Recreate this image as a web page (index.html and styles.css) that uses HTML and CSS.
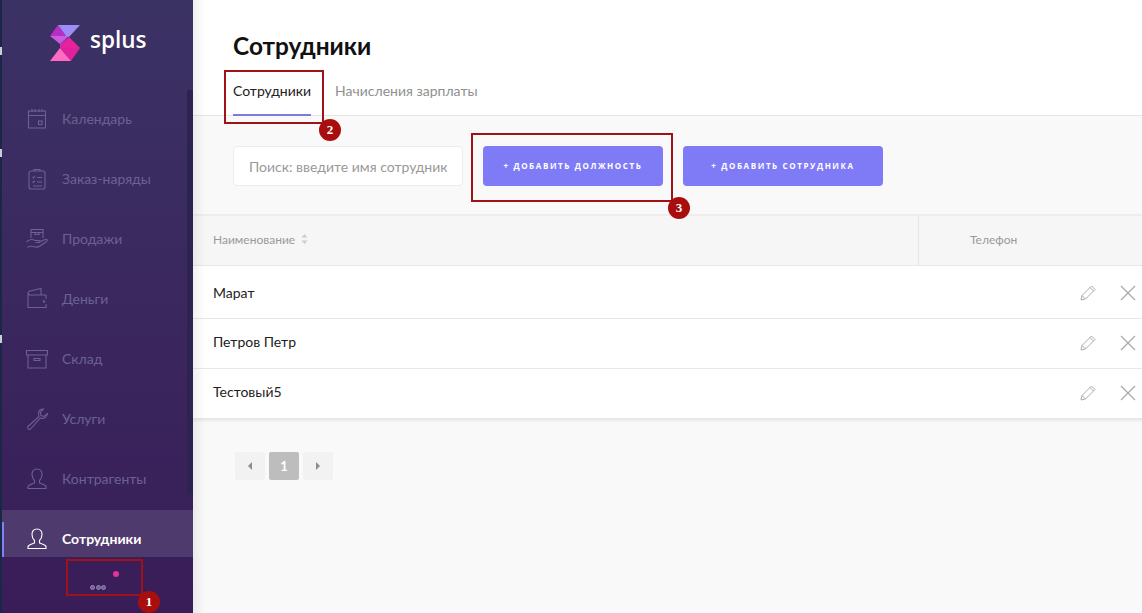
FILE: index.html
```html
<!DOCTYPE html>
<html lang="ru">
<head>
    <meta charset="UTF-8">
    <meta name="viewport" content="width=device-width, initial-scale=1.0">
    <title>Сотрудники</title>
    <link rel="stylesheet" href="styles.css">
</head>
<body>

    <div class="sidebar">
        <!-- Край соседнего окна слева -->
        <span class="edge-bit bit-1"></span>
        <span class="edge-bit bit-2"></span>
        <span class="edge-bit bit-3"></span>

        <div class="logo">
            <svg class="logo-mark" width="32" height="38" viewBox="0 0 32 38">
                <polygon points="0,11 8,0 16,11" fill="#b52fc4"/>
                <polygon points="8,0 30,0 19,12 16,11" fill="#9d8cf5"/>
                <polygon points="0,11 19,11 10,19" fill="#c95be0"/>
                <polygon points="19,12 30,23 10,23" fill="#e8229f"/>
                <polygon points="10,19 19,12 10,23" fill="#d92ab5"/>
                <polygon points="10,23 30,23 21,36" fill="#e0209c"/>
                <polygon points="10,23 21,36 0,36" fill="#ff6bc1"/>
            </svg>
            <span class="logo-text">splus</span>
        </div>

        <div class="nav">
            <a class="nav-item">
                <svg class="nav-icon" viewBox="0 0 24 24"><rect x="3.5" y="4" width="17" height="17"/><path d="M3.5 8.5h17M7 2v3M10 2v3M14 2v3M17 2v3"/><rect x="13.5" y="14" width="3.5" height="3.5"/></svg>
                Календарь
            </a>
            <a class="nav-item">
                <svg class="nav-icon" viewBox="0 0 24 24"><rect x="4" y="4" width="16" height="18" rx="2"/><path d="M9 4V2.5h6V4M7.5 10l1 1 1.5-2M12 10.5h5M7.5 14.5l1 1 1.5-2M12 15h5M8 19h9"/></svg>
                Заказ-наряды
            </a>
            <a class="nav-item">
                <svg class="nav-icon" viewBox="0 0 24 24"><path d="M6 11V2.5h12V11M6 5.5h12M10 5.5v2h4v-2"/><path d="M1.5 15c3-3 6-3 8.5-1.5h4c1.5 0 1.5 2 0 2h-3.5M14 15l6-2.5c2-.7 3 1 1.5 2L15 19c-3 2-5 1-7 .5-2-.5-4 0-5.5 1"/></svg>
                Продажи
            </a>
            <a class="nav-item">
                <svg class="nav-icon" viewBox="0 0 24 24"><path d="M21 8H5.5C4 8 3 7 3 6v14.5h18V17M21 12V8"/><path d="M3 6c0-1 1-1.5 2-2l11-2.500V8"/><circle cx="19" cy="14.5" r=".7"/></svg>
                Деньги
            </a>
            <a class="nav-item">
                <svg class="nav-icon" viewBox="0 0 24 24"><path d="M1.5 3.5h21V8h-21zM3 8v13h18V8M9 11.5h6v2H9z"/></svg>
                Склад
            </a>
            <a class="nav-item">
                <svg class="nav-icon" viewBox="0 0 24 24"><path d="M14 9.5 3 19.5c-1 1 0 2.5.8 2.8.8.3 1.7 0 2.2-.8l9.5-10.500c3 1.200 6.500-.5 7-4.500L19 9.5l-3-1-.8-3L18.500 2c-4-.5-6 3-4.500 7.500z"/></svg>
                Услуги
            </a>
            <a class="nav-item">
                <svg class="nav-icon" viewBox="0 0 24 24"><path d="M12 2c-3.500 0-5 2.500-5 5.500 0 2.500 1 4.500 2.500 6V16c-2.500 1-6 1.500-6.500 3.500v2h18v-2c-.5-2-4-2.500-6.500-3.500v-2.500c1.500-1.500 2.500-3.500 2.500-6C17 4.500 15.500 2 12 2z"/></svg>
                Контрагенты
            </a>
            <a class="nav-item active">
                <svg class="nav-icon" viewBox="0 0 24 24"><path d="M12 2c-3.500 0-5 2.500-5 5.500 0 2.500 1 4.500 2.500 6V16c-2.500 1-6 1.500-6.500 3.500v2h18v-2c-.5-2-4-2.500-6.500-3.500v-2.500c1.500-1.500 2.500-3.500 2.500-6C17 4.500 15.500 2 12 2z"/></svg>
                Сотрудники
            </a>
        </div>

        <div class="scrollbar"></div>

        <div class="more">
            <span class="more-dot"></span>
            <span class="more-ring"></span>
            <span class="more-ring"></span>
            <span class="more-ring"></span>
        </div>
    </div>

    <div class="main">
        <div class="header">
            <h1>Сотрудники</h1>
            <div class="tabs">
                <a class="tab active">Сотрудники</a>
                <a class="tab">Начисления зарплаты</a>
            </div>
        </div>

        <div class="toolbar">
            <input class="search" type="text" placeholder="Поиск: введите имя сотрудника">
            <button class="add-button wide">+ Добавить должность</button>
            <button class="add-button wider">+ Добавить сотрудника</button>
        </div>

        <div class="table">
            <div class="table-head">
                <div class="col-name">
                    Наименование
                    <svg class="sort-icon" width="7" height="10" viewBox="0 0 7 10"><path d="M3.5 0 6.5 3.5H.5zM3.5 10 .5 6.5h6z"/></svg>
                </div>
                <div class="col-phone">Телефон</div>
            </div>

            <div class="table-row first">
                <span>Марат</span>
                <div class="row-actions">
                    <svg class="edit-icon" viewBox="0 0 16 16"><path d="M1 15l1-4.500L11.500 1 15 4.500 5.500 14zM2 10.500 5.500 14M10 2.500 13.500 6"/></svg>
                    <svg class="del-icon" viewBox="0 0 16 16"><path d="M1 1l14 14M15 1 1 15"/></svg>
                </div>
            </div>
            <div class="table-row">
                <span>Петров Петр</span>
                <div class="row-actions">
                    <svg class="edit-icon" viewBox="0 0 16 16"><path d="M1 15l1-4.500L11.500 1 15 4.500 5.500 14zM2 10.500 5.500 14M10 2.500 13.500 6"/></svg>
                    <svg class="del-icon" viewBox="0 0 16 16"><path d="M1 1l14 14M15 1 1 15"/></svg>
                </div>
            </div>
            <div class="table-row">
                <span>Тестовый5</span>
                <div class="row-actions">
                    <svg class="edit-icon" viewBox="0 0 16 16"><path d="M1 15l1-4.500L11.500 1 15 4.500 5.500 14zM2 10.500 5.500 14M10 2.500 13.500 6"/></svg>
                    <svg class="del-icon" viewBox="0 0 16 16"><path d="M1 1l14 14M15 1 1 15"/></svg>
                </div>
            </div>
        </div>

        <div class="pagination">
            <a class="page"><span class="arrow-left"></span></a>
            <a class="page current">1</a>
            <a class="page"><span class="arrow-right"></span></a>
        </div>
    </div>

    <!-- Пометки поверх скриншота -->
    <div class="mark-box box-1"></div>
    <div class="mark-box box-2"></div>
    <div class="mark-box box-3"></div>
    <span class="mark-num num-1">1</span>
    <span class="mark-num num-2">2</span>
    <span class="mark-num num-3">3</span>

</body>
</html>
```

FILE: styles.css
```css
body {
    font-family: Lato, "Liberation Sans", sans-serif;
    margin: 0;
    padding: 0;
    height: 613px;
    overflow: hidden;
    display: flex;
    position: relative;
    background-color: #f9f9f9;
}

/* Боковое меню */
.sidebar {
    width: 191px;
    flex-shrink: 0;
    border-left: 2px solid #1b2748;
    background: linear-gradient(#3b3264, #391d58);
    position: relative;
    z-index: 2;
}

.edge-bit {
    position: absolute;
    left: -2px;
    width: 2px;
    height: 8px;
    background-color: #c9ced8;
}

.bit-1 {
    top: 47px;
}

.bit-2 {
    top: 149px;
}

.bit-3 {
    top: 335px;
}

.logo {
    height: 90px;
    padding-left: 48px;
    box-sizing: border-box;
    padding-top: 25px;
    display: flex;
    align-items: flex-start;
}

.logo-text {
    color: white;
    font-family: "Open Sans", sans-serif;
    font-size: 22.5px;
    font-weight: 600;
    line-height: 30px;
    margin-left: 8px;
}

.nav-item {
    display: flex;
    align-items: center;
    height: 47px;
    padding: 11px 0 0 23px;
    box-sizing: border-box;
    margin-bottom: 13px;
    color: #6c6193;
    font-size: 14px;
    line-height: 18px;
    position: relative;
}

.nav-item.active {
    background-color: #4f3a6d;
    color: white;
    font-weight: 700;
}

.nav-item.active::before {
    content: "";
    position: absolute;
    left: 0;
    top: 12px;
    bottom: 0;
    width: 2px;
    background-color: #7c84f0;
}

.nav-icon {
    width: 24px;
    height: 24px;
    margin-right: 13px;
    fill: none;
    stroke: #6c6193;
    stroke-width: 1.1;
}

.active .nav-icon {
    stroke: white;
}

.scrollbar {
    position: absolute;
    right: 0;
    top: 90px;
    width: 6px;
    height: 403px;
    background-color: #2d2350;
}

.more {
    position: absolute;
    left: 88px;
    top: 585px;
    display: flex;
    gap: 0.5px;
}

.more-ring {
    width: 3px;
    height: 3px;
    border: 1px solid #8f84ad;
    border-radius: 50%;
    background-color: #6f6390;
}

.more-dot {
    position: absolute;
    left: 23px;
    top: -14px;
    width: 6px;
    height: 6px;
    border-radius: 50%;
    background-color: #e4339b;
}

/* Основная часть */
.main {
    flex: 1;
    min-width: 0;
    position: relative;
}

/* Тень от меню */
.main::after {
    content: "";
    position: absolute;
    left: 0;
    top: 0;
    bottom: 0;
    width: 12px;
    background: linear-gradient(to right, rgba(0,0,0,0.06), rgba(0,0,0,0));
    pointer-events: none;
}

.header {
    height: 116px;
    box-sizing: border-box;
    background-color: white;
    padding: 30px 0 0 40px;
    border-bottom: 1px solid #e6e6e6;
}

h1 {
    margin: 0;
    font-size: 24.4px;
    line-height: 32px;
    font-weight: 700;
    color: #111;
}

.tabs {
    display: flex;
    gap: 24px;
    margin-top: 19px;
}

.tab {
    color: #8f8f8f;
    font-size: 14px;
    line-height: 20px;
    padding-bottom: 13px;
    height: 20px;
}

.tab.active {
    color: #222;
    border-bottom: 2px solid #7d7ad9;
}

.toolbar {
    height: 98px;
    box-sizing: border-box;
    padding: 30px 0 0 40px;
    display: flex;
    align-items: flex-start;
    gap: 20px;
}

.search {
    width: 230px;
    height: 40px;
    box-sizing: border-box;
    padding: 0 15px;
    border: 1px solid #ececec;
    border-radius: 4px;
    background-color: white;
    font-family: Lato, sans-serif;
    font-size: 14px;
}

.search::placeholder {
    color: #999;
}

.add-button {
    height: 40px;
    border: none;
    border-radius: 4px;
    background-color: #7f7bf7;
    color: white;
    font-family: "Open Sans", sans-serif;
    font-size: 8px;
    font-weight: 700;
    letter-spacing: 1.6px;
    text-transform: uppercase;
    padding: 0 0 2px;
}

.wide {
    width: 180px;
}

.wider {
    width: 200px;
}

/* Таблица */
.table {
    background-color: white;
    border-top: 2px solid #ededed;
    border-bottom: 2px solid #e8e8e8;
    box-shadow: 0 2px 0 #f1f1f1;
}

.table-head {
    height: 49px;
    display: flex;
    background-color: #f6f6f6;
    color: #9a9a9a;
    font-size: 12px;
    line-height: 47px;
}

.col-name {
    width: 705px;
    padding-left: 20px;
    border-right: 1px solid #e6e6e6;
}

.col-phone {
    padding-left: 51px;
}

.sort-icon {
    fill: #cccccc;
    margin-left: 3px;
}

.table-row {
    height: 49px;
    border-top: 1px solid #e8e8e8;
    padding-left: 20px;
    display: flex;
    justify-content: space-between;
    align-items: center;
    color: #222;
    font-size: 14px;
}

.table-row span {
    margin-bottom: 4px;
}

.table-row.first {
    height: 52px;
}

.table-row.first span {
    margin-bottom: 0;
}

.row-actions {
    display: flex;
    align-items: center;
    gap: 24px;
    padding-right: 6px;
    margin-bottom: 1px;
}

.first .row-actions {
    margin-bottom: 0;
    margin-top: 2px;
}

.edit-icon {
    width: 16px;
    height: 16px;
    fill: none;
    stroke: #acacac;
    stroke-width: 1;
}

.del-icon {
    width: 16px;
    height: 16px;
    fill: none;
    stroke: #a8a8a8;
    stroke-width: 1.2;
}

.pagination {
    display: flex;
    gap: 4px;
    padding: 32px 0 0 42px;
}

.page {
    width: 30px;
    height: 28px;
    background-color: #f2f2f2;
    border-radius: 2px;
    display: flex;
    align-items: center;
    justify-content: center;
    font-size: 13px;
    font-weight: 700;
    color: white;
}

.page.current {
    background-color: #bdbdbd;
}

.arrow-left {
    border: 4px solid transparent;
    border-left: none;
    border-right: 4px solid #8c8c8c;
}

.arrow-right {
    border: 4px solid transparent;
    border-right: none;
    border-left: 4px solid #8c8c8c;
}

/* Красные пометки */
.mark-box {
    position: absolute;
    border: 2px solid #a11218;
    box-sizing: border-box;
    z-index: 5;
}

.box-1 {
    left: 66px;
    top: 559px;
    width: 77px;
    height: 37px;
}

.box-2 {
    left: 224px;
    top: 70px;
    width: 100px;
    height: 54px;
}

.box-3 {
    left: 471px;
    top: 133px;
    width: 202px;
    height: 69px;
}

.mark-num {
    position: absolute;
    width: 22px;
    height: 22px;
    border-radius: 50%;
    background-color: #a90e0e;
    color: white;
    font-family: "Liberation Serif", serif;
    font-size: 13px;
    font-weight: 700;
    line-height: 22px;
    text-align: center;
    z-index: 6;
}

.num-1 {
    left: 138px;
    top: 591px;
}

.num-2 {
    left: 319px;
    top: 119px;
}

.num-3 {
    left: 668px;
    top: 197px;
}
```
